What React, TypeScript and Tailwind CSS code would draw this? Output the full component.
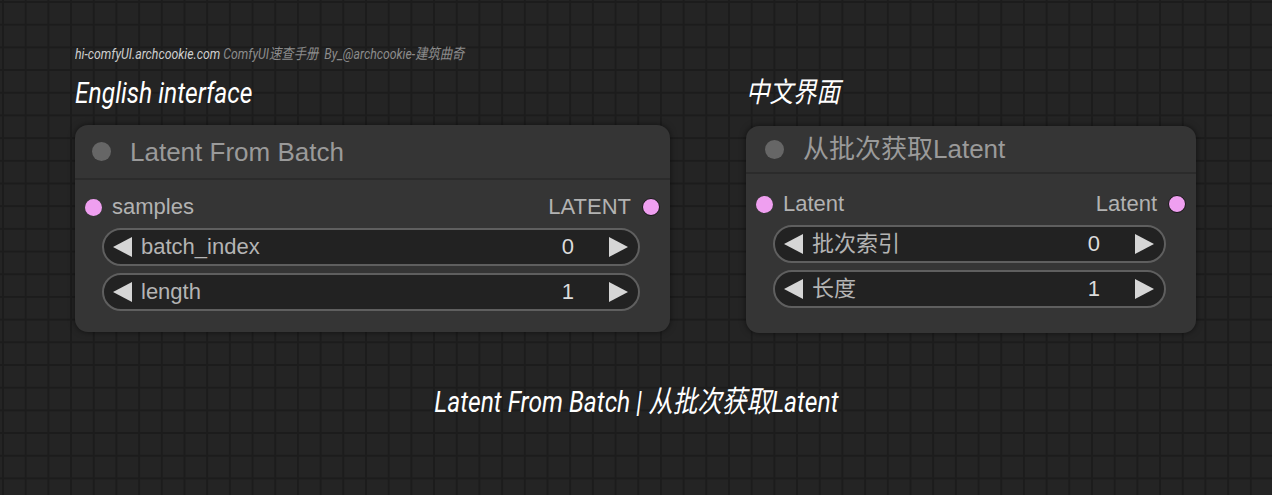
import React from "react";

const SANS = "font-['Liberation_Sans','Noto_Sans_CJK_SC',sans-serif]";

function Tri({ dir }: { dir: "l" | "r" }) {
  return (
    <svg width="19" height="20" viewBox="0 0 19 20" className="shrink-0">
      <path d={dir === "l" ? "M19 0 L0 10 L19 20 Z" : "M0 0 L19 10 L0 20 Z"} fill="#d6d6d6" />
    </svg>
  );
}

function Widget({ label, value, h }: { label: string; value: string; h: string }) {
  return (
    <div
      className={`flex items-center rounded-full bg-[#222222] border-2 border-[#5f5f5f] pl-[9px] pr-[10px] ${h}`}
    >
      <Tri dir="l" />
      <span className="ml-[9px] text-[22px] text-[#b4b4b4] leading-none">{label}</span>
      <span className="ml-auto text-[22px] text-[#dcdcdc] leading-none">{value}</span>
      <span className="ml-[35px]">
        <Tri dir="r" />
      </span>
    </div>
  );
}

function Node({
  title,
  inName,
  outName,
  widgets,
  w,
  titleH,
  titlePl,
  titleGap,
  widgetH,
  widgetGap,
  rowMt,
}: {
  title: string;
  inName: string;
  outName: string;
  widgets: { label: string; value: string }[];
  w: string;
  titleH: string;
  titlePl: string;
  titleGap: string;
  widgetH: string;
  widgetGap: string;
  rowMt: string;
}) {
  return (
    <div
      className={`${w} h-[207px] rounded-[13px] bg-[#353535] shadow-[0_0_6px_rgba(0,0,0,0.55)] flex flex-col ${SANS}`}
    >
      <div className={`${titleH} ${titlePl} ${titleGap} flex items-center border-b-2 border-[#2b2b2b] shrink-0`}>
        <div className="w-[19px] h-[19px] rounded-full bg-[#666666]" />
        <span className="text-[26px] leading-none text-[#9a9a9a]">{title}</span>
      </div>
      <div className={`flex items-center h-[26px] ${rowMt} pl-[10px] pr-[10px]`}>
        <div className="w-[17px] h-[17px] rounded-full bg-[#ef9ff0]" />
        <span className="ml-[10px] text-[22px] leading-none text-[#b2b2b2]">{inName}</span>
        <span className="ml-auto mr-[11px] text-[22px] leading-none text-[#b2b2b2]">{outName}</span>
        <div className="w-[18px] h-[18px] rounded-full bg-[#ef9ff0] border-[1.5px] border-[#151515]" />
      </div>
      <div className={`flex flex-col ${widgetGap} mt-[8px] ml-[27px] mr-[30px]`}>
        {widgets.map((x) => (
          <Widget key={x.label} label={x.label} value={x.value} h={widgetH} />
        ))}
      </div>
    </div>
  );
}

export default function App() {
  return (
    <div
      className="w-[1272px] h-[495px] overflow-hidden bg-[#242424] bg-[linear-gradient(to_right,#1c1c1c_2px,transparent_2px),linear-gradient(to_bottom,#1c1c1c_2px,transparent_2px)] bg-[size:22.7px_22.7px] bg-[position:2px_1px] flex flex-col pl-[75px] pt-[45px] font-['Roboto','Noto_Sans_CJK_SC',sans-serif] italic"
    >
      <div className="h-[18px] flex items-center">
        <span className="inline-block origin-left scale-x-[0.82] whitespace-nowrap text-[15px] leading-none">
          <span className="text-[#cfcfcf]">hi-comfyUI.archcookie.com</span>
          <span className="text-[#8c8c8c]"> ComfyUI速查手册&nbsp; By_@archcookie-建筑曲奇</span>
        </span>
      </div>
      <div className="flex mt-[13px]">
        <div className="flex flex-col w-[671px]">
          <div className="h-[34px] flex items-center">
            <span className="inline-block origin-left scale-x-[0.82] whitespace-nowrap text-[30px] leading-none text-white">
              English interface
            </span>
          </div>
          <div className="mt-[15px] not-italic">
            <Node
              title="Latent From Batch"
              inName="samples"
              outName="LATENT"
              widgets={[
                { label: "batch_index", value: "0" },
                { label: "length", value: "1" },
              ]}
              w="w-[595px]"
              titleH="h-[55px]"
              titlePl="pl-[17px]"
              titleGap="gap-[19px]"
              widgetH="h-[38px]"
              widgetGap="gap-[7px]"
              rowMt="mt-[14px]"
            />
          </div>
        </div>
        <div className="flex flex-col">
          <div className="h-[34px] flex items-center">
            <span className="inline-block origin-left scale-x-[0.84] whitespace-nowrap text-[28px] leading-none text-white">
              中文界面
            </span>
          </div>
          <div className="mt-[16px] not-italic">
            <Node
              title="从批次获取Latent"
              inName="Latent"
              outName="Latent"
              widgets={[
                { label: "批次索引", value: "0" },
                { label: "长度", value: "1" },
              ]}
              w="w-[450px]"
              titleH="h-[48px]"
              titlePl="pl-[19px]"
              titleGap="gap-[19px]"
              widgetH="h-[38px]"
              widgetGap="gap-[7px]"
              rowMt="mt-[17px]"
            />
          </div>
        </div>
      </div>
      <div className="mt-[54px] flex justify-center ml-[-75px]">
        <span className="inline-block scale-x-[0.82] whitespace-nowrap text-[30px] leading-none text-white">
          Latent From Batch | 从批次获取Latent
        </span>
      </div>
    </div>
  );
}
